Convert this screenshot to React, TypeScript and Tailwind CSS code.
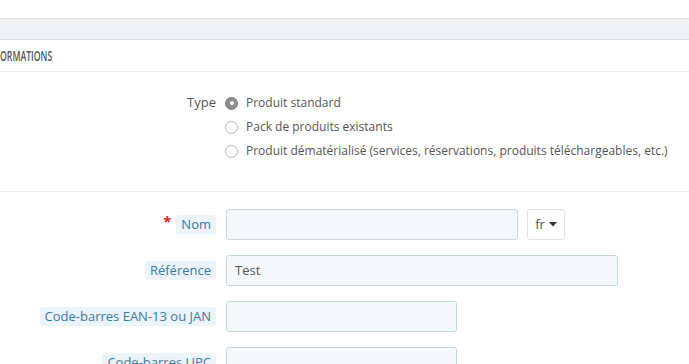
import React from "react";

const font = { fontFamily: '"Open Sans", "Liberation Sans", sans-serif' };

function Radio({ checked }: { checked?: boolean }) {
  return checked ? (
    <span className="flex h-[13px] w-[13px] shrink-0 items-center justify-center rounded-full border border-[#7d7d7d] bg-[#8c8c8c]">
      <span className="h-[4px] w-[4px] rounded-full bg-white" />
    </span>
  ) : (
    <span className="h-[13px] w-[13px] shrink-0 rounded-full border border-[#b5b5b5] bg-white" />
  );
}

function Badge({ children }: { children: React.ReactNode }) {
  return (
    <span className="inline-block whitespace-nowrap rounded-[3px] bg-[#eaf4fa] px-[5px] text-[13px] leading-[19px] text-[#41799c]">
      {children}
    </span>
  );
}

function Row({
  label,
  required,
  inputW,
  value,
  extra,
}: {
  label: string;
  required?: boolean;
  inputW: string;
  value?: string;
  extra?: React.ReactNode;
}) {
  return (
    <div className="flex h-[31px] shrink-0 items-center">
      <div className="flex w-[216px] shrink-0 items-center justify-end">
        {required && (
          <span className="-mt-[6px] mr-[5px] text-[15px] font-bold leading-none text-[#e0202a]">*</span>
        )}
        <Badge>{label}</Badge>
      </div>
      <div className="ml-[10px] flex items-center">
        <div
          className={`${inputW} flex h-[31px] items-center rounded-[3px] border border-[#c7d6db] bg-[#f4f8f9] px-[8px] text-[13px] text-[#555]`}
        >
          {value}
        </div>
        {extra}
      </div>
    </div>
  );
}

function RadioRow({ label, checked, first }: { label: string; checked?: boolean; first?: boolean }) {
  return (
    <div className="flex h-[24px] items-center">
      <div className="w-[216px] shrink-0 text-right text-[13px]">{first ? "Type" : ""}</div>
      <div className="ml-[9px] flex items-center gap-[8px] whitespace-nowrap text-[12px]">
        <Radio checked={checked} />
        <span>{label}</span>
      </div>
    </div>
  );
}

export default function App() {
  return (
    <div className="h-[364px] w-[689px] overflow-hidden bg-white text-[#555]" style={font}>
      <div className="h-[18px]" />
      <div className="h-[22px] border-y border-[#dcdfe0] bg-[#eff1f2]" />
      <div className="flex h-[32px] items-center border-b border-[#eeeeee]">
        <span className="inline-block origin-left scale-x-[0.58] text-[15px] font-semibold text-[#555]">
          ORMATIONS
        </span>
      </div>
      <div className="pt-[19px] pb-[28px]">
        <RadioRow first checked label="Produit standard" />
        <RadioRow label="Pack de produits existants" />
        <RadioRow label="Produit dématérialisé (services, réservations, produits téléchargeables, etc.)" />
      </div>
      <div className="border-t border-[#eeeeee]" />
      <div className="flex flex-col gap-[15px] pt-[17px]">
        <Row
          label="Nom"
          required
          inputW="w-[292px]"
          extra={
            <div className="ml-[9px] flex h-[31px] w-[38px] items-center justify-center gap-[4px] rounded-[3px] border border-[#e2e2e2] bg-white text-[13px] text-[#555]">
              <span>fr</span>
              <svg width="8" height="5" viewBox="0 0 8 5">
                <path d="M0 0 L8 0 L4 4.5 Z" fill="#333" />
              </svg>
            </div>
          }
        />
        <Row label="Référence" inputW="w-[392px]" value="Test" />
        <Row label="Code-barres EAN-13 ou JAN" inputW="w-[231px]" />
        <Row label="Code-barres UPC" inputW="w-[231px]" />
      </div>
    </div>
  );
}
